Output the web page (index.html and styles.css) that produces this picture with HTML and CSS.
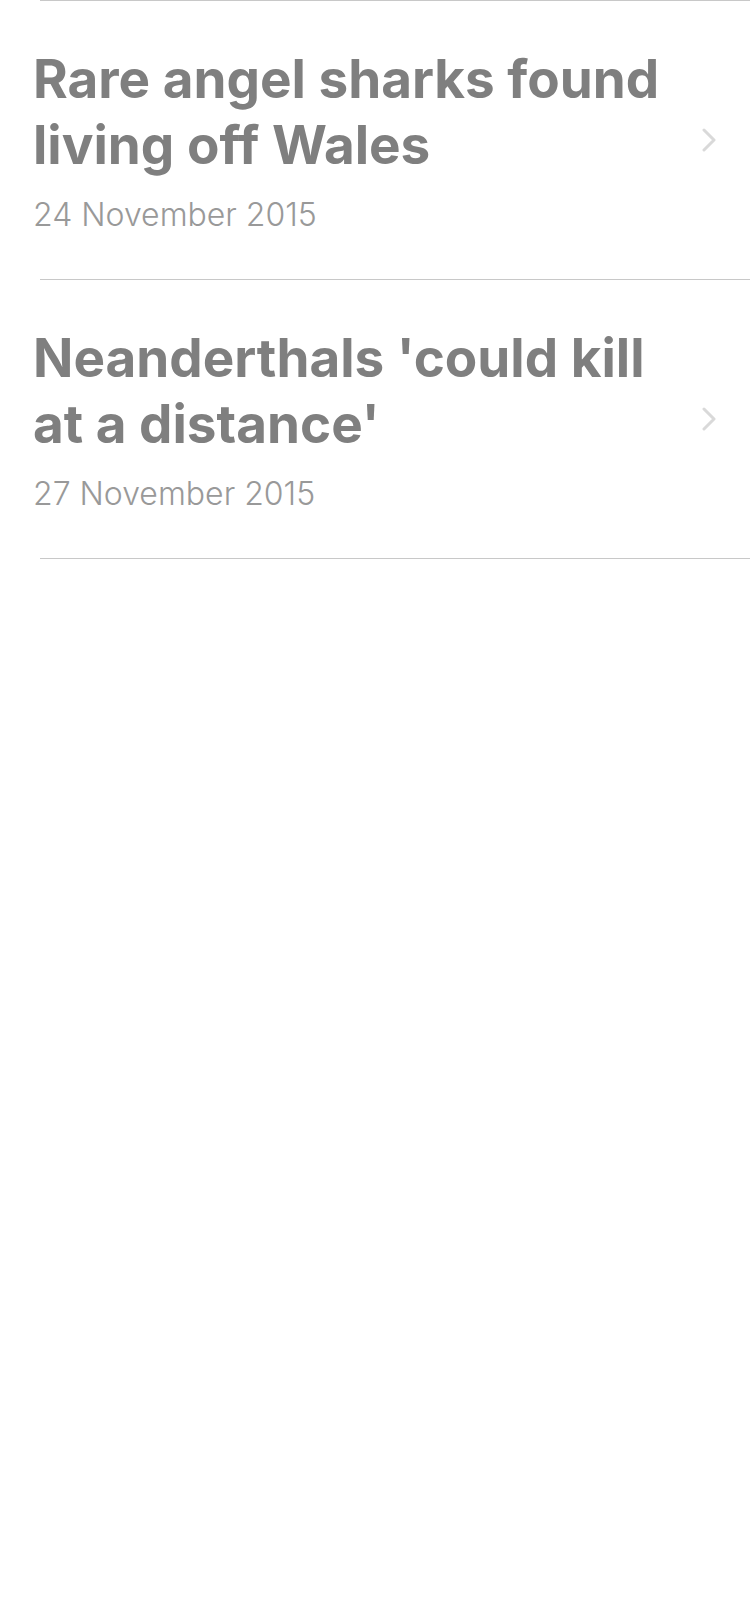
FILE: index.html
```html
<!DOCTYPE html>
<html lang="en">
<head>
<meta charset="utf-8">
<title>News</title>
<link rel="stylesheet" href="styles.css">
</head>
<body>
<ul class="list">
  <li class="row">
    <div class="text">
      <h2 class="title">Rare angel sharks found living off Wales</h2>
      <p class="date">24 November 2015</p>
    </div>
    <svg class="chevron" width="14" height="24" viewBox="0 0 14 24" aria-hidden="true">
      <polyline points="2,2 12,12 2,22" fill="none" stroke="#d9d9d9" stroke-width="3" stroke-linecap="round" stroke-linejoin="round"/>
    </svg>
  </li>
  <li class="row">
    <div class="text">
      <h2 class="title">Neanderthals 'could kill at a distance'</h2>
      <p class="date">27 November 2015</p>
    </div>
    <svg class="chevron" width="14" height="24" viewBox="0 0 14 24" aria-hidden="true">
      <polyline points="2,2 12,12 2,22" fill="none" stroke="#d9d9d9" stroke-width="3" stroke-linecap="round" stroke-linejoin="round"/>
    </svg>
  </li>
</ul>
</body>
</html>
```
FILE: styles.css
```css
html, body {
  margin: 0;
  padding: 0;
  background: #ffffff;
}

body {
  font-family: Inter, "Noto Sans", "Liberation Sans", sans-serif;
}

.list {
  list-style: none;
  margin: 0;
  padding: 1px 0 0 0;
  background: linear-gradient(#c8c8c8, #c8c8c8) no-repeat 40px 0 / calc(100% - 40px) 1px;
}

.row {
  display: flex;
  align-items: center;
  gap: 20px;
  box-sizing: border-box;
  height: 279px;
  padding: 0 34px 1px 33px;
  background: linear-gradient(#c8c8c8, #c8c8c8) no-repeat 40px 100% / calc(100% - 40px) 1px;
}

.text {
  flex: 1;
  min-width: 0;
  display: flex;
  flex-direction: column;
  gap: 17px;
}

.title {
  margin: 0;
  font-size: 53px;
  line-height: 66px;
  font-weight: 700;
  letter-spacing: 0;
  color: #7f7f7f;
}

.date {
  margin: 0;
  font-size: 32px;
  line-height: 40px;
  font-weight: 300;
  color: #999999;
}

.chevron {
  flex: none;
  display: block;
}
```
